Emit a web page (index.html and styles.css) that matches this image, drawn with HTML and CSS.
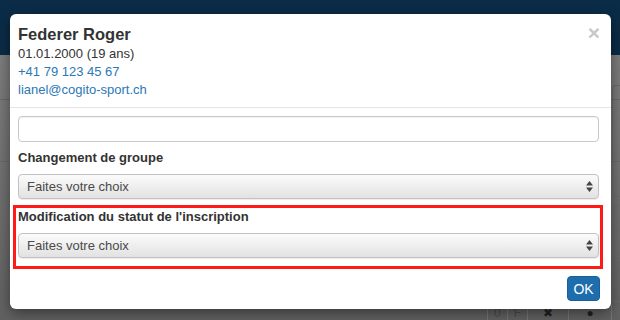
FILE: index.html
```html
<!DOCTYPE html>
<html lang="fr">
<head>
    <meta charset="UTF-8">
    <meta name="viewport" content="width=device-width, initial-scale=1.0">
    <title>Inscription</title>
    <link rel="stylesheet" href="styles.css">
</head>
<body>

    <div class="page">
        <div class="navbar"></div>
        <div class="content">
            <div class="row-line line-1"></div>
            <div class="row-line line-2"></div>
            <div class="side-card card-1"></div>
            <div class="side-card card-2"></div>
            <div class="side-card card-3"></div>
            <table class="bg-table">
                <tr>
                    <td>0</td>
                    <td>F</td>
                    <td class="bg-icon">&#x2716;</td>
                    <td class="bg-icon">&#x25CF;</td>
                </tr>
            </table>
        </div>
    </div>

    <div class="modal">
        <div class="modal-header">
            <span class="close">&times;</span>
            <h4 class="person-name">Federer Roger</h4>
            <div class="person-line">01.01.2000 (19 ans)</div>
            <div class="person-line"><a href="#">+41 79 123 45 67</a></div>
            <div class="person-line"><a href="#">lianel@cogito-sport.ch</a></div>
        </div>

        <div class="modal-body">
            <input type="text" class="form-input">

            <label class="form-label">Changement de groupe</label>
            <div class="form-select">
                <span>Faites votre choix</span>
                <svg class="arrows" width="7" height="11" viewBox="0 0 7 11"><path d="M3.5 0 L7 4.5 H0 Z M0 6.5 H7 L3.5 11 Z" fill="#444"/></svg>
            </div>

            <div class="highlight-group">
                <label class="form-label first">Modification du statut de l'inscription</label>
                <div class="form-select">
                    <span>Faites votre choix</span>
                    <svg class="arrows" width="7" height="11" viewBox="0 0 7 11"><path d="M3.5 0 L7 4.5 H0 Z M0 6.5 H7 L3.5 11 Z" fill="#444"/></svg>
                </div>
            </div>
        </div>

        <div class="modal-footer">
            <button class="btn-ok">OK</button>
        </div>
    </div>

</body>
</html>
```

FILE: styles.css
```css
html, body {
    margin: 0;
    padding: 0;
}

body {
    width: 620px;
    height: 320px;
    overflow: hidden;
    font-family: "Liberation Sans", Arial, sans-serif;
    font-size: 13px;
    color: #333;
    position: relative;
}

.page {
    height: 320px;
    display: flex;
    flex-direction: column;
}

.navbar {
    height: 55px;
    background-color: #0b2c47;
}

.content {
    flex: 1;
    position: relative;
    background: linear-gradient(#7d7d7d, #6d6d6d 60%, #616161);
}

.row-line {
    position: absolute;
    left: 0;
    right: 0;
    height: 1px;
    background-color: #686868;
}

.line-1 { top: 44px; }
.line-2 { top: 106px; }

.side-card {
    position: absolute;
    right: -6px;
    width: 12px;
    border: 1px solid #6a6a6a;
    border-radius: 4px;
}

.card-1 { top: 30px; height: 110px; }
.card-2 { top: 150px; height: 50px; }
.card-3 { top: 205px; height: 40px; }

.bg-table {
    position: absolute;
    left: 487px;
    top: 250px;
    border-collapse: collapse;
    color: #4a4a4a;
}

.bg-table td {
    border: 1px solid #777;
    height: 14px;
    line-height: 14px;
    padding: 0 6px;
    font-size: 12px;
    text-align: center;
}

.bg-table td:nth-child(3) { width: 28px; }
.bg-table td:nth-child(4) { width: 30px; }

.bg-icon {
    color: #222;
}

.modal {
    position: absolute;
    left: 10px;
    top: 14px;
    width: 601px;
    background-color: #fff;
    border-radius: 6px;
    box-shadow: 0 4px 14px rgba(0, 0, 0, 0.45);
}

.modal-header {
    position: relative;
    padding: 9px 12px 8px 8px;
    border-bottom: 1px solid #e5e5e5;
}

.close {
    position: absolute;
    right: 11px;
    top: 8px;
    font-size: 21px;
    font-weight: bold;
    color: #c8c8c8;
    line-height: 22px;
}

.person-name {
    margin: 0;
    font-size: 16.5px;
    font-weight: bold;
    line-height: 22px;
    color: #333;
}

.person-line {
    line-height: 18px;
}

a {
    color: #2b78b6;
    text-decoration: none;
}

.modal-body {
    padding: 8px 12px 0 8px;
}

.form-input {
    display: block;
    width: 100%;
    height: 26px;
    margin: 0;
    border: 1px solid #c8c8c8;
    border-radius: 4px;
    box-sizing: border-box;
    box-shadow: inset 0 1px 1px rgba(0, 0, 0, 0.06);
}

.form-label {
    display: block;
    margin: 7px 0 7px;
    font-weight: bold;
    line-height: 18px;
    color: #333;
}

.form-label.first {
    margin-top: 0;
}

.form-select {
    height: 25px;
    box-sizing: border-box;
    border: 1px solid #c2c2c2;
    border-radius: 4px;
    background: linear-gradient(#fbfbfb, #ececec 60%, #e2e2e2);
    display: flex;
    align-items: center;
    justify-content: space-between;
    padding: 0 5px 0 8px;
    color: #4a4a4a;
    box-shadow: 0 1px 1px rgba(0, 0, 0, 0.08);
}

.arrows {
    display: block;
}

.highlight-group {
    margin: 6px -4px 0 -5px;
    padding: 0 1px 8px 2px;
    border: 3px solid #ff1a1a;
}

.modal-footer {
    padding: 7px 11px 8px;
    display: flex;
    justify-content: flex-end;
}

.btn-ok {
    height: 25px;
    width: 33px;
    padding: 0;
    border: 1px solid #1b5f98;
    border-radius: 4px;
    background-color: #1e6eae;
    color: #fff;
    font-family: "Liberation Sans", Arial, sans-serif;
    font-size: 14px;
}
```
